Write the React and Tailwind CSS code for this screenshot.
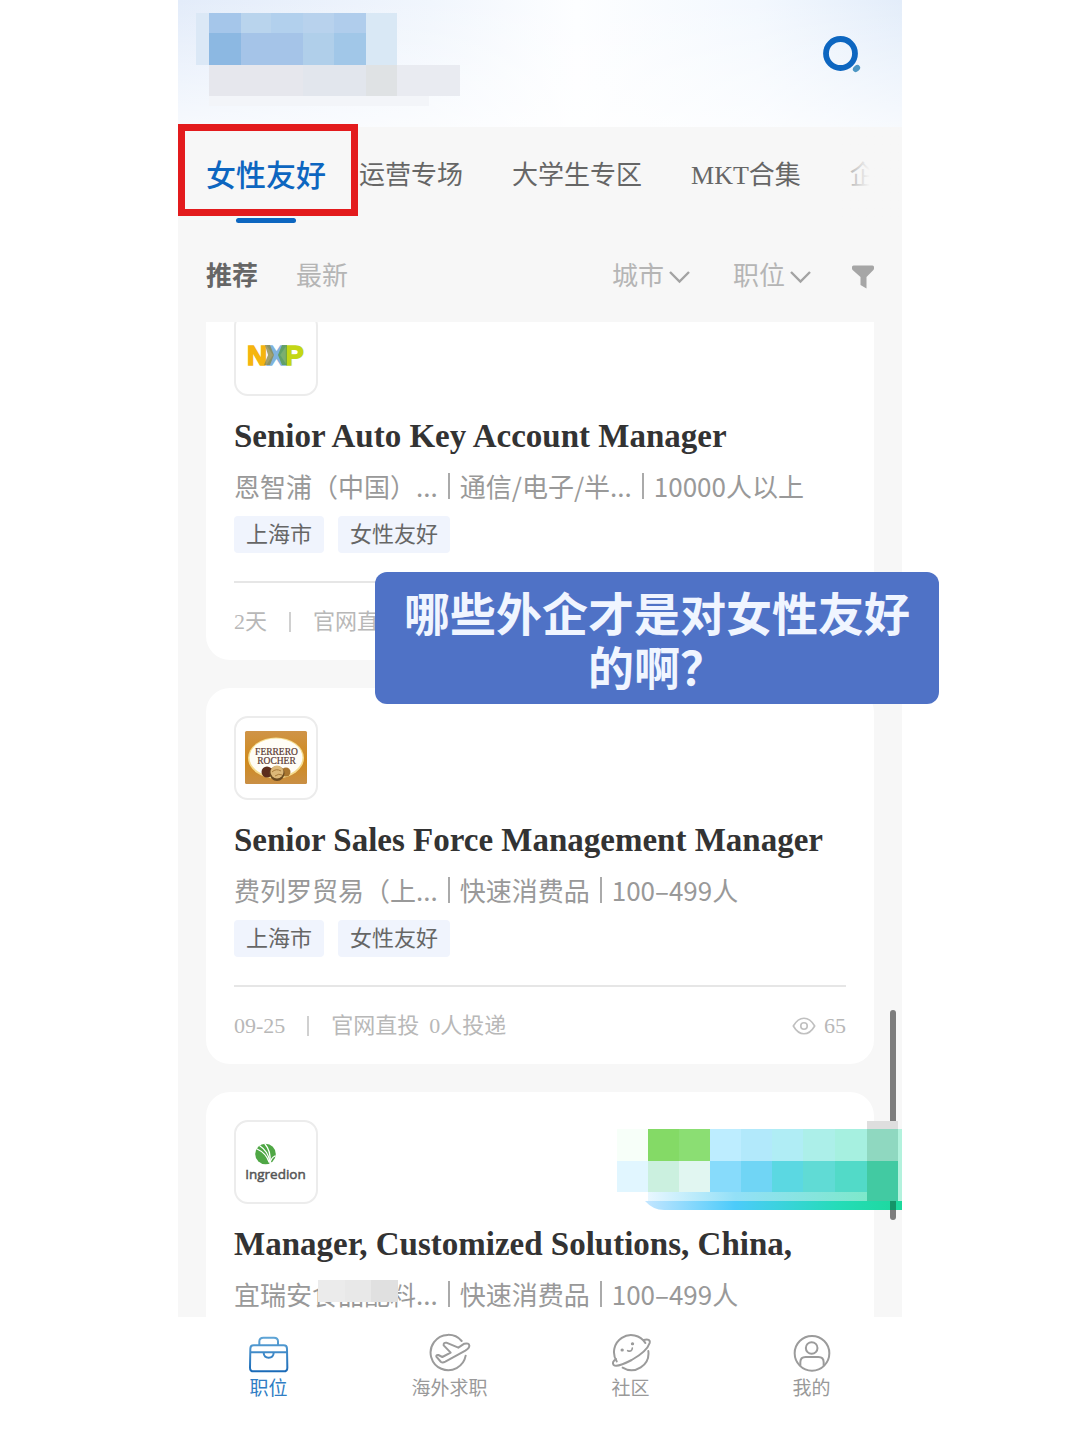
import React, { useState } from 'react';

const TABS = ['女性友好', '运营专场', '大学生专区', 'MKT合集', '企业'];

const JOBS = [
  {
    id: 1,
    logo: 'nxp',
    title: 'Senior Auto Key Account Manager',
    company: '恩智浦（中国）...',
    industry: '通信/电子/半...',
    size: '10000人以上',
    tags: ['上海市', '女性友好'],
    date: '2天',
  },
  {
    id: 2,
    logo: 'ferrero',
    title: 'Senior Sales Force Management Manager',
    company: '费列罗贸易（上...',
    industry: '快速消费品',
    size: '100–499人',
    tags: ['上海市', '女性友好'],
    date: '09-25',
    applied: '0人投递',
    views: 65,
  },
  {
    id: 3,
    logo: 'ingredion',
    title: 'Manager, Customized Solutions, China,',
    company: '宜瑞安食品配料...',
    masked: true,
    banner: true,
    industry: '快速消费品',
    size: '100–499人',
    tags: ['上海市'],
    date: '09-25',
  },
];

/* ---------- Logos ---------- */

function NxpLogo() {
  return (
    <svg viewBox="2 2 80 80" className="h-full w-full" role="img" aria-label="NXP">
      <g fontFamily="Liberation Sans, Arial, sans-serif" fontWeight="700" fontSize="28" strokeWidth="1.6">
        <text x="13" y="53" fill="#f5b50f" stroke="#f5b50f">N</text>
        <text x="51" y="53" fill="#c3d615" stroke="#c3d615">P</text>
        <text x="33" y="53" fill="#7fb2dd" stroke="#7fb2dd">X</text>
      </g>
      <path d="M31 33h5l4 10-4 10h-6l4-10z" fill="#8a8a4a" opacity=".8" />
      <path d="M48 33h5v20h-5l-4-10z" fill="#5a9a4c" opacity=".8" />
    </svg>
  );
}

function FerreroLogo() {
  return (
    <svg viewBox="2 2 80 80" className="h-full w-full" role="img" aria-label="Ferrero Rocher">
      <defs>
        <linearGradient id="gold" x1="0" y1="0" x2="0" y2="1">
          <stop offset="0" stopColor="#cf9448" />
          <stop offset=".55" stopColor="#d08a1c" />
          <stop offset="1" stopColor="#c98f45" />
        </linearGradient>
      </defs>
      <rect x="11" y="15" width="62" height="53" rx="1.5" fill="url(#gold)" />
      <ellipse cx="42" cy="42" rx="28" ry="20.5" fill="#f5dc8e" />
      <ellipse cx="42" cy="41.5" rx="26.5" ry="19" fill="#fffdf6" />
      <g fontFamily="Liberation Serif, serif" fontSize="9.5" fill="#5a3a34" stroke="#5a3a34" strokeWidth=".2" textAnchor="middle">
        <text x="42.5" y="38.5">FERRERO</text>
        <text x="42.5" y="47.5">ROCHER</text>
      </g>
      <circle cx="33" cy="56" r="5.5" fill="#5d2d1c" />
      <circle cx="52" cy="56" r="4.5" fill="#a9762f" />
      <circle cx="43" cy="57.5" r="7.5" fill="#6b4a1f" />
      <circle cx="43" cy="56" r="6.5" fill="#dcb878" />
      <path d="M38 56q4-4 9-1M41 60q4-3 7-1" stroke="#a87a3a" strokeWidth="1" fill="none" />
    </svg>
  );
}

function IngredionLogo() {
  return (
    <svg viewBox="2 2 80 80" className="h-full w-full" role="img" aria-label="Ingredion">
      <circle cx="31.5" cy="34" r="10.3" fill="#4fa745" />
      <g fill="none" stroke="#fff" strokeLinecap="round" strokeWidth="1.3">
        <path d="M23 29q9 4 12 13" />
        <path d="M26 26q8 5 10 16" />
        <path d="M31 24q6 7 5 18" />
        <path d="M41 36q-4 2-5 7" />
      </g>
      <text x="41.5" y="59" textAnchor="middle" fontFamily="Open Sans, sans-serif" fontSize="13.5" fill="#555" stroke="#555" strokeWidth=".5">
        Ingredion
      </text>
    </svg>
  );
}

const LOGOS = { nxp: NxpLogo, ferrero: FerreroLogo, ingredion: IngredionLogo };

/* ---------- Icons ---------- */

function SearchIcon() {
  return (
    <svg viewBox="0 0 40 38" className="h-[38px] w-10" fill="none">
      <circle cx="18.5" cy="18.5" r="14.5" stroke="#0d66c0" strokeWidth="5.8" />
      <ellipse cx="34.5" cy="33.5" rx="4" ry="3" transform="rotate(-40 34.5 33.5)" fill="#4c97c4" />
    </svg>
  );
}

function ChevronIcon() {
  return (
    <svg viewBox="0 0 22 14" className="pointer-events-none h-3.5 w-[22px]" fill="none" stroke="#a3a3a3" strokeWidth="2.4">
      <path d="M1 2l9.5 9.5L20 2" />
    </svg>
  );
}

function FunnelIcon() {
  return (
    <svg viewBox="0 0 22 24" className="h-6 w-[22px]" fill="#a6a6a6">
      <path d="M1.5 .5h19q1.500 0 1.500 1.500v1.500q0 .8-.6 1.400L14.500 12v11.500L8.500 20V12L.6 4.900Q0 4.300 0 3.500V2Q0 .5 1.500 .5z" />
    </svg>
  );
}

function EyeIcon() {
  return (
    <svg viewBox="572 48 74 60" className="h-5 w-6" fill="none" stroke="#c0c0c0" strokeWidth="5">
      <path d="M576 78Q590 54 609 54T642 78Q628 102 609 102T576 78z" strokeLinejoin="round" />
      <circle cx="609" cy="78" r="10" />
    </svg>
  );
}

function JobIcon() {
  return (
    <svg viewBox="84 36 126 120" className="h-10 w-[42px]" fill="none" stroke="url(#bag)" strokeWidth="6">
      <defs>
        <linearGradient id="bag" gradientUnits="userSpaceOnUse" x1="0" y1="48" x2="0" y2="152">
          <stop offset="0" stopColor="#5fa5d6" />
          <stop offset="1" stopColor="#1b6bb8" />
        </linearGradient>
      </defs>
      <path d="M118 73V61q0-11 12-11h32q12 0 12 11v12" />
      <path d="M101 73h90q10 0 10 10l1 57q0 11-11 11h-90q-11 0-11-11l1-57q0-10 10-10z" />
      <path d="M91 94h110M131 96q1 14 15 14t15-14" />
    </svg>
  );
}

function PlaneIcon() {
  return (
    <svg viewBox="624 36 132 120" className="h-10 w-11" fill="none" stroke="#9b9b9b" strokeWidth="6" strokeLinejoin="round" strokeLinecap="round">
      <path d="M725 60A53 53 0 1 0 737 104" />
      <path d="M663 123L649 107q-1-6 6-5l12 6 25-13-21-22q-1-9 8-8l36 15 18-12q14-3 15 6 0 7-12 15l-60 33q-8 4-13 1z" />
    </svg>
  );
}

function PlanetIcon() {
  return (
    <svg viewBox="90 36 126 120" className="h-10 w-[42px]" fill="none" stroke="#9b9b9b" strokeWidth="6" strokeLinecap="round">
      <path d="M110 121A51 51 0 1 1 196 66" />
      <path d="M128 140A51 51 0 0 0 205 90" />
      <path d="M191 57q21-5 18 9-8 25-54 51-44 23-54 15-7-8 7-18" />
      <path d="M126 87h1M157 68h1" strokeWidth="9" />
      <path d="M143 89q13 5 14-8" strokeWidth="5" />
    </svg>
  );
}

function UserIcon() {
  return (
    <svg viewBox="633 36 120 120" className="h-10 w-10" fill="none" stroke="#9b9b9b" strokeWidth="6">
      <circle cx="693" cy="97" r="52" />
      <circle cx="692" cy="81" r="17.5" />
      <path d="M658 134v-10q0-16 16-16h38q16 0 16 16v10" />
    </svg>
  );
}

/* ---------- Pixelated areas ---------- */

function BrandMosaic() {
  return (
    <svg viewBox="0 0 264 94" className="h-[94px] w-[264px]" shapeRendering="crispEdges">
      <rect x="0" y="0" width="13" height="52" fill="#dbe8f6" />
      <rect x="13" y="0" width="32" height="20" fill="#a5c6ea" />
      <rect x="45" y="0" width="30" height="20" fill="#b9d4ed" />
      <rect x="75" y="0" width="32" height="20" fill="#b2d0ed" />
      <rect x="107" y="0" width="31" height="20" fill="#b8d2ed" />
      <rect x="138" y="0" width="32" height="20" fill="#b0cdec" />
      <rect x="13" y="20" width="32" height="32" fill="#8cb8e2" />
      <rect x="45" y="20" width="62" height="32" fill="#a5c4e8" />
      <rect x="107" y="20" width="31" height="32" fill="#b0cfea" />
      <rect x="138" y="20" width="32" height="32" fill="#a1c7e8" />
      <rect x="170" y="0" width="31" height="52" fill="#d9e8f5" />
      <rect x="13" y="52" width="94" height="31" fill="#e6e7ed" />
      <rect x="107" y="52" width="63" height="31" fill="#e2e6ed" />
      <rect x="170" y="52" width="31" height="31" fill="#dfe2e4" />
      <rect x="201" y="52" width="63" height="31" fill="#e9ebf1" />
      <rect x="13" y="83" width="220" height="10" fill="#f3f5f9" />
    </svg>
  );
}

function BannerMosaic() {
  return (
    <svg viewBox="0 0 285 90" className="h-[90px] w-[285px]">
      <defs>
        <linearGradient id="strip" x1="0" x2="1">
          <stop offset="0" stopColor="#c4e6ff" />
          <stop offset=".35" stopColor="#4ccbfa" />
          <stop offset=".75" stopColor="#25dcb8" />
          <stop offset="1" stopColor="#1cd99c" />
        </linearGradient>
        <linearGradient id="stripLight" x1="0" x2="1">
          <stop offset="0" stopColor="#e8f7ff" />
          <stop offset=".4" stopColor="#93e0f7" />
          <stop offset="1" stopColor="#7de8cb" />
        </linearGradient>
      </defs>
      <g shapeRendering="crispEdges">
        <rect x="0" y="8" width="31" height="32" fill="#f7fff9" />
        <rect x="31" y="8" width="31" height="32" fill="#84da66" />
        <rect x="62" y="8" width="31" height="32" fill="#8bde73" />
        <rect x="93" y="8" width="31" height="32" fill="#bdedff" />
        <rect x="124" y="8" width="31" height="32" fill="#b2e9fb" />
        <rect x="155" y="8" width="31" height="32" fill="#b0edf5" />
        <rect x="186" y="8" width="32" height="32" fill="#acefe9" />
        <rect x="218" y="8" width="32" height="32" fill="#a6f0e0" />
        <rect x="250" y="0" width="31" height="8" fill="#dedede" />
        <rect x="250" y="8" width="31" height="32" fill="#8fd8c0" />
        <rect x="281" y="8" width="4" height="72" fill="#b3f2dd" />
        <rect x="0" y="40" width="31" height="31" fill="#e1f6ff" />
        <rect x="31" y="40" width="31" height="31" fill="#cbf0df" />
        <rect x="62" y="40" width="31" height="31" fill="#e1f6f1" />
        <rect x="93" y="40" width="31" height="31" fill="#87dbfb" />
        <rect x="124" y="40" width="31" height="31" fill="#70d5f5" />
        <rect x="155" y="40" width="31" height="31" fill="#5bd8e2" />
        <rect x="186" y="40" width="32" height="31" fill="#60dbd5" />
        <rect x="218" y="40" width="32" height="31" fill="#52dac8" />
        <rect x="250" y="40" width="31" height="40" fill="#42caa2" />
        <rect x="31" y="71" width="219" height="9" fill="url(#stripLight)" />
      </g>
      <path d="M28 80h257v9H47q-11 0-19-9z" fill="url(#strip)" />
      <path d="M273 80h6v9h-6z" fill="#149468" />
    </svg>
  );
}

/* ---------- Job card ---------- */

function JobCard({ job }) {
  const Logo = LOGOS[job.logo];

  return (
    <article className="relative shrink-0 rounded-[24px] bg-white px-7 pt-7">
      <div className="h-[84px] w-[84px] overflow-hidden rounded-[14px] border-2 border-[#ececec]">
        <Logo />
      </div>

      {job.banner && (
        <div className="absolute -right-7 top-[29px] z-20">
          <BannerMosaic />
        </div>
      )}

      <h2 className="mt-5 whitespace-nowrap text-[33px] font-bold leading-10 text-[#333]">{job.title}</h2>

      <div className="mt-3 flex items-center gap-2.5 whitespace-nowrap font-['Noto_Sans_CJK_SC',sans-serif] text-[26px] leading-9 text-[#999]">
        <span className="relative">
          {job.company}
          {job.masked && (
            <span className="absolute left-[84px] top-1 flex h-[22px] w-20">
              <span className="flex-1 bg-[#ebebeb]" />
              <span className="flex-1 bg-[#e8e8e8]" />
              <span className="flex-1 bg-[#e0e0e0]" />
            </span>
          )}
        </span>
        <span className="h-[26px] w-0.5 bg-[#aaa]" />
        <span>{job.industry}</span>
        <span className="h-[26px] w-0.5 bg-[#aaa]" />
        <span>{job.size}</span>
      </div>

      <ul className="mt-3 flex gap-3.5 text-[22px] leading-[37px] text-[#666]">
        {job.tags.map((tag) => (
          <li key={tag} className="rounded bg-[#f0f4fd] px-3">{tag}</li>
        ))}
      </ul>

      <div className="mt-7 flex items-center border-t-2 border-[#e6e6e6] py-[22px] text-[22px] leading-[33px] text-[#b8b8b8]">
        <span>{job.date}</span>
        <span className="mx-[22px] h-5 w-0.5 bg-[#d0d0d0]" />
        <span className="mr-2.5">官网直投</span>
        {job.applied && <span>{job.applied}</span>}
        {job.views && (
          <span className="ml-auto flex items-center gap-2">
            <EyeIcon />
            {job.views}
          </span>
        )}
      </div>
    </article>
  );
}

const NAV = [
  { label: '职位', Icon: JobIcon },
  { label: '海外求职', Icon: PlaneIcon },
  { label: '社区', Icon: PlanetIcon },
  { label: '我的', Icon: UserIcon },
];

export default function App() {
  const [tab, setTab] = useState('女性友好');
  const [sort, setSort] = useState('推荐');

  return (
    <div className="h-screen overflow-hidden bg-white font-['Liberation_Serif','Noto_Sans_CJK_SC',serif]">
      <div className="relative mx-auto flex h-full w-full max-w-[724px] flex-col bg-[#f7f7f7]">
        <header className="flex h-[127px] shrink-0 items-start justify-between bg-[linear-gradient(to_bottom,transparent,rgba(255,255,255,.7)),linear-gradient(to_right,#e3ecfa,#f1f6fd_35%,#fdfeff_55%,#f3f8fe_80%,#e3edfa)] pl-[18px] pr-10 pt-[13px]">
          <BrandMosaic />
          <button type="button" aria-label="搜索" className="mt-[22px]">
            <SearchIcon />
          </button>
        </header>

        {/* Category tabs */}
        <nav className="relative shrink-0">
          <div className="flex h-24 gap-[49px] overflow-hidden whitespace-nowrap pl-7">
            {TABS.map((item) => (
              <button
                key={item}
                type="button"
                onClick={() => setTab(item)}
                className={
                  item === tab
                    ? 'relative -mr-4 shrink-0 text-[30px] font-medium text-[#0d66c0]'
                    : 'shrink-0 text-[26px] text-[#666]'
                }
              >
                {item}
                {item === tab && (
                  <span className="absolute bottom-0 left-1/2 h-[5px] w-[60px] -translate-x-1/2 rounded-full bg-[#0d66c0]" />
                )}
              </button>
            ))}
          </div>
          <div className="pointer-events-none absolute inset-y-0 right-0 w-20 bg-gradient-to-r from-transparent to-[#f7f7f7] to-60%" />
          <div className="pointer-events-none absolute -top-[3px] left-0 h-[92px] w-[180px] border-[7px] border-[#e31b1d]" />
        </nav>

        {/* Sort and filters */}
        <div className="flex h-[99px] shrink-0 items-center px-7 pt-2 text-[26px] text-[#b5b5b5]">
          {['推荐', '最新'].map((item) => (
            <button
              key={item}
              type="button"
              onClick={() => setSort(item)}
              className={item === sort ? 'mr-[38px] font-bold text-[#666]' : 'mr-[38px]'}
            >
              {item}
            </button>
          ))}
          <div className="ml-auto mr-10 flex items-center gap-[42px]">
            {['城市', '职位'].map((item) => (
              <label key={item} className="flex items-center gap-1">
                <select aria-label={item} className="appearance-none bg-transparent outline-none">
                  <option>{item}</option>
                </select>
                <ChevronIcon />
              </label>
            ))}
          </div>
          <button type="button" aria-label="筛选">
            <FunnelIcon />
          </button>
        </div>

        {/* Job list */}
        <main className="relative min-h-0 flex-1 overflow-hidden px-7">
          <div className="-mt-[38px] flex flex-col gap-7">
            {JOBS.map((job) => (
              <JobCard key={job.id} job={job} />
            ))}
          </div>
          <div className="absolute right-1.5 top-[688px] z-10 h-[210px] w-1.5 rounded-full bg-[#7d7d7d]" />
        </main>

        <footer className="h-[123px] shrink-0 bg-white">
          <ul className="grid grid-cols-4 pt-4">
            {NAV.map(({ label, Icon }, i) => (
              <li key={label}>
                <a
                  href="#"
                  className={`flex flex-col items-center gap-0.5 text-[19px] leading-7 ${i === 0 ? 'text-[#2f7dc4]' : 'text-[#999]'}`}
                >
                  <Icon />
                  {label}
                </a>
              </li>
            ))}
          </ul>
        </footer>

        {/* Caption over the list */}
        <p className="absolute -right-[37px] left-[197px] top-[572px] z-30 rounded-xl bg-[#4f72c6] px-7 py-3 text-center font-['Noto_Sans_CJK_SC',sans-serif] text-[46px] font-bold leading-[54px] text-[#f0f5ff]">
          哪些外企才是对女性友好的啊？
        </p>
      </div>
    </div>
  );
}
